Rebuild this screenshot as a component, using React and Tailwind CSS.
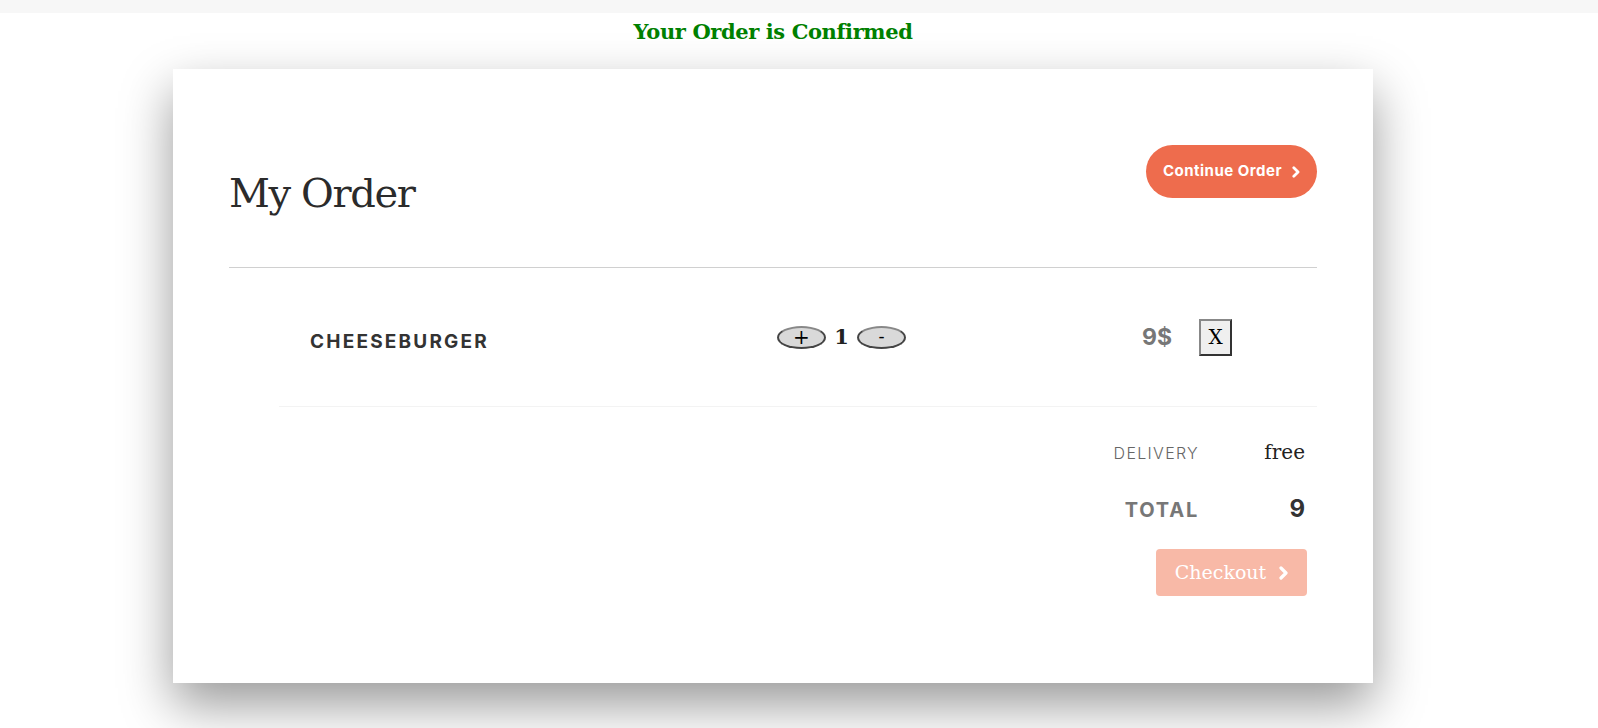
import { useState } from 'react';

const sans = "font-['Inter','Noto_Sans',sans-serif]";
const serif = "font-['DejaVu_Serif','Liberation_Serif',serif]";

function Chevron({ className, width = 3 }) {
  return (
    <svg viewBox="0 0 10 14" className={className} fill="none" stroke="currentColor" strokeWidth={width} strokeLinecap="round" strokeLinejoin="round">
      <polyline points="3,2 8,7 3,12" />
    </svg>
  );
}

function App() {
  const [qty, setQty] = useState(1);
  const price = 9;

  return (
    <div className="min-h-screen bg-white">
      <div className="h-[13px] bg-[#f7f7f7]" />
      <div className="w-[1546px]">
        <h2 className={`${serif} mt-[4px] text-center text-[21px] font-bold leading-[30px] tracking-[-0.4px] text-[#008000]`}>
          Your Order is Confirmed
        </h2>

        {/* carte */}
        <div className="mx-auto mt-[22px] w-[1200px] bg-white px-[56px] pb-[87px] pt-[76px] shadow-[0_22px_48px_rgba(0,0,0,0.4)]">
          <div className="flex items-start justify-between border-b border-[#d0d0d0] pb-[50px]">
            <h1 className={`${serif} mt-[24px] text-[40px] leading-[48px] tracking-[-1.4px] text-[#2b2b2b]`}>My Order</h1>
            <button className={`${sans} flex h-[53px] w-[171px] items-center justify-center gap-[9px] rounded-full bg-[#ee6c4d] text-[15px] font-bold tracking-[0.5px] text-white`}>
              Continue Order
              <Chevron className="h-[12px] w-[9px]" width={3.2} />
            </button>
          </div>

          <div className="ml-[50px] flex h-[139px] items-center border-b border-[#f3f3f3] pl-[31px]">
            <div className={`${sans} w-[467px] pt-[10px] text-[19px] font-bold tracking-[2.2px] text-[#333]`}>CHEESEBURGER</div>
            <div className="flex w-[129px] items-center justify-between">
              <button
                onClick={() => setQty(qty + 1)}
                className={`${serif} flex h-[23px] w-[49px] items-center justify-center rounded-[50%] border-2 border-[#444] border-t-[#888] bg-[#d9d9d9] text-[20px] leading-none text-black`}
              >
                +
              </button>
              <span className={`${serif} text-[21px] font-bold text-[#222]`}>{qty}</span>
              <button
                onClick={() => setQty(Math.max(0, qty - 1))}
                className={`${serif} flex h-[23px] w-[49px] items-center justify-center rounded-[50%] border-2 border-[#444] border-t-[#888] bg-[#d9d9d9] text-[18px] leading-none text-black`}
              >
                -
              </button>
            </div>
            <div className={`${sans} ml-[236px] w-[57px] text-[23px] font-bold text-[#777]`}>{price}$</div>
            <button className={`${serif} flex h-[37px] w-[33px] items-center justify-center border-2 border-[#888] border-b-[#333] border-r-[#333] bg-[#efefef] text-[20px] text-black`}>
              X
            </button>
          </div>

          <div className="flex flex-col items-end pr-[12px] pt-[30px]">
            <div className="flex items-baseline">
              <span className={`${sans} text-[16px] font-light tracking-[1.3px] text-[#666]`}>DELIVERY</span>
              <span className={`${serif} w-[106px] text-right text-[20px] text-[#222]`}>free</span>
            </div>
            <div className="mt-[24px] flex items-baseline">
              <span className={`${sans} text-[20px] font-bold tracking-[1.8px] text-[#777]`}>TOTAL</span>
              <span className={`${sans} w-[106px] text-right text-[24px] font-bold text-[#333]`}>{price * qty}</span>
            </div>
            <button className={`${serif} mr-[-2px] mt-[22px] flex h-[47px] w-[151px] items-center justify-center gap-[12px] rounded-[4px] bg-[#f8b9a7] text-[19px] text-white`}>
              Checkout
              <Chevron className="h-[14px] w-[10px]" width={3.2} />
            </button>
          </div>
        </div>
      </div>
    </div>
  );
}

export default App;
